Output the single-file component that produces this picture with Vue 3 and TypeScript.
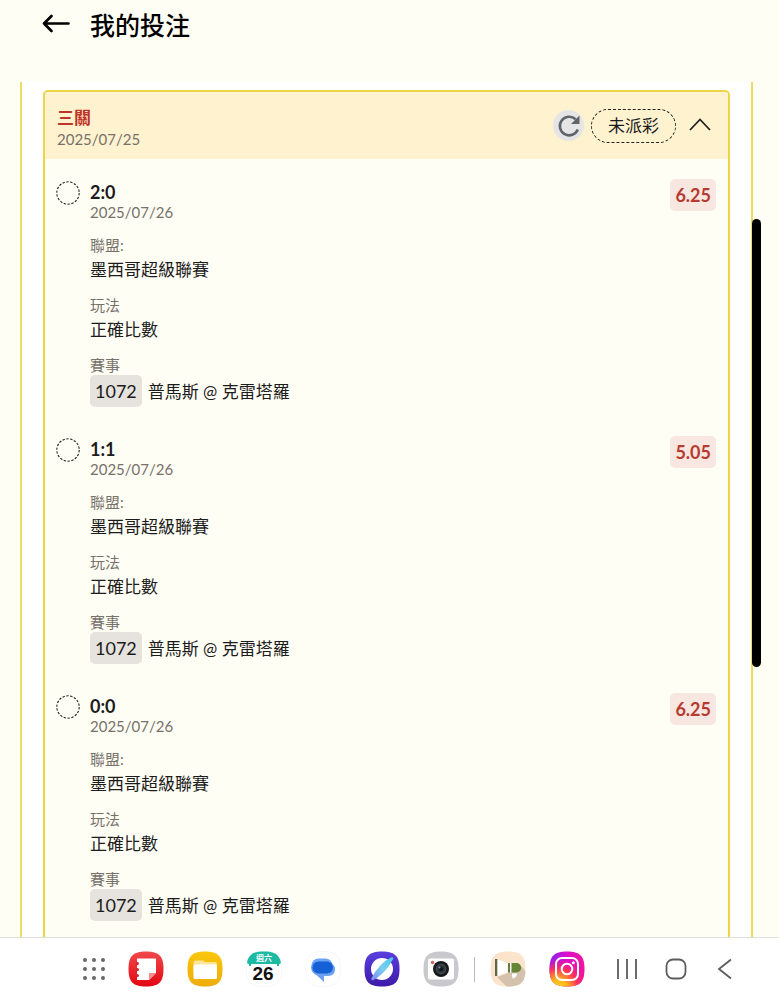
<script setup lang="ts">
import { ref } from 'vue'

interface Leg {
  score: string
  date: string
  league: string
  market: string
  matchId: string
  teams: [string, string]
  odds: string
}

const base = {
  date: '2025/07/26',
  league: '墨西哥超級聯賽',
  market: '正確比數',
  matchId: '1072',
  teams: ['普馬斯', '克雷塔羅'] as [string, string],
}

const legs: Leg[] = [
  { ...base, score: '2:0', odds: '6.25' },
  { ...base, score: '1:1', odds: '5.05' },
  { ...base, score: '0:0', odds: '6.25' },
]

const open = ref(true)
const dots = [0, 1, 2, 3, 4, 5, 6, 7, 8]
</script>

<template>
  <div class="screen">
    <header class="topbar">
      <button class="back" type="button" aria-label="返回">
        <svg width="28" height="20" viewBox="0 0 28 20" fill="none" stroke="#000" stroke-width="2.7" stroke-linecap="round" stroke-linejoin="round">
          <path d="M26.5 9.500H2M9.500 2L2 9.500l7.500 7.500" />
        </svg>
      </button>
      <h1>我的投注</h1>
    </header>

    <main class="viewport">
      <div class="panel">
        <section class="card">
          <div class="card-head">
            <div class="card-title">
              <h2>三關</h2>
              <time>2025/07/25</time>
            </div>
            <button class="refresh" type="button" aria-label="重新整理">
              <svg width="24" height="24" viewBox="0 0 24 24" fill="none">
                <path d="M20.8 15.5A9.300 9.300 0 1 1 18.600 5.300" stroke="#60656b" stroke-width="2.600" />
                <path d="M22.500 1.500v8.500H14z" fill="#60656b" />
              </svg>
            </button>
            <span class="status">未派彩</span>
            <button class="toggle" type="button" aria-label="收合" :aria-expanded="open" @click="open = !open">
              <svg width="22" height="16" viewBox="0 0 22 16" fill="none" stroke="#222" stroke-width="1.8">
                <path d="M1 12L11 1.500 21 12" />
              </svg>
            </button>
          </div>

          <template v-if="open">
            <article v-for="leg in legs" :key="leg.score" class="leg">
              <svg class="pending" width="24" height="24" viewBox="0 0 24 24" fill="none" aria-hidden="true">
                <circle cx="12" cy="12" r="11.2" stroke="#222" stroke-width="1.1" stroke-dasharray="2.4 1.5" />
              </svg>
              <div class="leg-body">
                <h3>{{ leg.score }}</h3>
                <time>{{ leg.date }}</time>
                <dl>
                  <dt>聯盟:</dt>
                  <dd>{{ leg.league }}</dd>
                  <dt>玩法</dt>
                  <dd>{{ leg.market }}</dd>
                  <dt>賽事</dt>
                  <dd class="match">
                    <span class="match-id">{{ leg.matchId }}</span>
                    <span class="teams">{{ leg.teams[0] }} @ {{ leg.teams[1] }}</span>
                  </dd>
                </dl>
              </div>
              <strong class="odds">{{ leg.odds }}</strong>
            </article>
          </template>
        </section>
      </div>
      <div class="thumb"></div>
    </main>

    <nav class="taskbar" aria-label="工作列">
      <div class="app-row">
        <button class="apps" type="button" aria-label="所有應用程式">
          <span v-for="d in dots" :key="d" class="dot"></span>
        </button>

        <button type="button" aria-label="筆記">
          <svg width="36" height="36" viewBox="0 0 36 36">
            <defs>
              <linearGradient id="note" x1="0" y1="0" x2="0" y2="1">
                <stop offset="0" stop-color="#f04a4c" /><stop offset="1" stop-color="#e30613" />
              </linearGradient>
            </defs>
            <path d="M18 .5C31 .5 35.500 5 35.500 18S31 35.500 18 35.500.5 31 .5 18 5 .5 18 .5z" fill="url(#note)" />
            <path d="M9 7.500h19v14.500l-7 7H9z" fill="#fff" />
            <path d="M21 29v-7h7z" fill="#f58b8b" />
            <g fill="#d9232b"><circle cx="9.500" cy="12.500" r="1.500" /><circle cx="9.500" cy="18.500" r="1.500" /><circle cx="9.500" cy="24.500" r="1.500" /></g>
          </svg>
        </button>

        <button type="button" aria-label="我的檔案">
          <svg width="36" height="36" viewBox="0 0 36 36">
            <defs>
              <linearGradient id="files" x1="0" y1="0" x2="0" y2="1">
                <stop offset="0" stop-color="#fac70b" /><stop offset="1" stop-color="#eeac0b" />
              </linearGradient>
            </defs>
            <path d="M18 .5C31 .5 35.500 5 35.500 18S31 35.500 18 35.500.5 31 .5 18 5 .5 18 .5z" fill="url(#files)" />
            <path d="M6.500 21v-9.500q0-2 2-2H16l2 1.500h10q2 0 2 2v8z" fill="#fde59a" />
            <rect x="6.500" y="13.500" width="23.500" height="14.500" rx="1.500" fill="#fff" />
          </svg>
        </button>

        <button type="button" aria-label="日曆">
          <svg width="36" height="36" viewBox="0 0 36 36">
            <path d="M18 .5C31 .5 35.500 5 35.500 18S31 35.500 18 35.500.5 31 .5 18 5 .5 18 .5z" fill="#fff" stroke="#f7f7f7" />
            <path d="M1 11.500C3 3 8 .5 18 .5S33 3 35 11.500q-.5 1.500-2 1.500v2h-2v-2H5v2H3v-2q-1.500 0-2-1.500z" fill="#1dbaa3" />
            <text class="cal-week" x="18" y="10" text-anchor="middle" fill="#fff">週六</text>
            <text class="cal-day" x="17" y="29" text-anchor="middle" fill="#111">26</text>
          </svg>
        </button>

        <button type="button" aria-label="訊息">
          <svg width="36" height="36" viewBox="0 0 36 36">
            <path d="M18 .5C31 .5 35.500 5 35.500 18S31 35.500 18 35.500.5 31 .5 18 5 .5 18 .5z" fill="#fff" stroke="#f7f7f7" />
            <rect x="6.500" y="7.500" width="21" height="15" rx="7" fill="#69a4f6" />
            <path d="M11 12h12q7 0 7 6.500T23 25h-4v6l-7-6.500q-6-2.500-6-9z" fill="#6b9fef" />
            <rect x="7.500" y="10.500" width="20.500" height="12" rx="6" fill="#1460d4" />
          </svg>
        </button>

        <button type="button" aria-label="瀏覽器">
          <svg width="36" height="36" viewBox="0 0 36 36">
            <defs>
              <linearGradient id="web" x1="0" y1="0" x2="0" y2="1">
                <stop offset="0" stop-color="#5a3fe0" /><stop offset="1" stop-color="#3d1ba8" />
              </linearGradient>
              <linearGradient id="ring" x1="0" y1="1" x2="1" y2="0">
                <stop offset="0" stop-color="#7f91f2" /><stop offset=".5" stop-color="#79cdf0" /><stop offset="1" stop-color="#4fcbe9" />
              </linearGradient>
            </defs>
            <path d="M18 .5C31 .5 35.500 5 35.500 18S31 35.500 18 35.500.5 31 .5 18 5 .5 18 .5z" fill="url(#web)" />
            <circle cx="18" cy="18" r="11" fill="#fff" />
            <path d="M8.500 28C12 20 20 11 28 7.500C24 15 17 24 8.500 28z" fill="url(#ring)" stroke="url(#ring)" stroke-width="2.500" stroke-linejoin="round" />
          </svg>
        </button>

        <button type="button" aria-label="相機">
          <svg width="36" height="36" viewBox="0 0 36 36">
            <path d="M18 .5C31 .5 35.500 5 35.500 18S31 35.500 18 35.500.5 31 .5 18 5 .5 18 .5z" fill="#c9c9cd" />
            <rect x="5" y="7.500" width="26" height="21" rx="2" fill="#fff" />
            <circle cx="9.500" cy="11.500" r="1.700" fill="#d3615e" />
            <circle cx="18" cy="18" r="8" fill="#171a1c" />
            <circle cx="18" cy="18" r="4.800" fill="#30383e" stroke="#465057" />
            <circle cx="18" cy="18" r="2.300" fill="#101416" />
            <circle cx="16.500" cy="16.500" r="1" fill="#8795a0" />
          </svg>
        </button>
      </div>

      <span class="divider"></span>

      <div class="app-row">
        <button type="button" aria-label="廣播">
          <svg width="36" height="36" viewBox="0 0 36 36">
            <defs>
              <clipPath id="tile"><path d="M18 .5C31 .5 35.500 5 35.500 18S31 35.500 18 35.500.5 31 .5 18 5 .5 18 .5z" /></clipPath>
            </defs>
            <g clip-path="url(#tile)">
              <rect width="36" height="36" fill="#fbe3cc" />
              <path d="M7 26l11-4 13-7 6 7v15H18z" fill="#d5c2ae" />
            </g>
            <rect x="5" y="8" width="2.500" height="17" fill="#5d6848" />
            <path d="M7.500 8.500L17.500 12v9.500L7.500 25z" fill="#fff" />
            <rect x="18" y="12" width="2" height="9.500" fill="#667c45" />
            <rect x="20" y="12" width="1.500" height="9.500" fill="#fff" />
            <path d="M21.500 12H26.500a4.700 4.700 0 0 1 0 9.500h-5z" fill="#668435" />
            <path d="M22 22.500h5q0 4-4 5l-1-2z" fill="#fff" />
          </svg>
        </button>

        <button type="button" aria-label="Instagram">
          <svg width="36" height="36" viewBox="0 0 36 36">
            <defs>
              <linearGradient id="ig" x1="0" y1="0" x2="1" y2="0">
                <stop offset="0" stop-color="#8a22ee" /><stop offset=".5" stop-color="#dc0ecb" /><stop offset="1" stop-color="#f0149e" />
              </linearGradient>
              <radialGradient id="igWarm" cx=".25" cy="1.050" r=".85">
                <stop offset="0" stop-color="#ffd421" /><stop offset=".3" stop-color="#ffb51b" /><stop offset=".65" stop-color="#ff3555" /><stop offset="1" stop-color="#ff1b85" stop-opacity="0" />
              </radialGradient>
            </defs>
            <path d="M18 .5C31 .5 35.500 5 35.500 18S31 35.500 18 35.500.5 31 .5 18 5 .5 18 .5z" fill="url(#ig)" />
            <path d="M18 .5C31 .5 35.500 5 35.500 18S31 35.500 18 35.500.5 31 .5 18 5 .5 18 .5z" fill="url(#igWarm)" />
            <g fill="none" stroke="#fff" stroke-width="2">
              <rect x="7" y="7" width="22" height="22" rx="6" />
              <circle cx="18" cy="18" r="5.300" />
            </g>
            <circle cx="24.300" cy="11.700" r="1.500" fill="#fff" />
          </svg>
        </button>
      </div>

      <div class="nav-keys">
        <button type="button" aria-label="最近使用">
          <svg width="22" height="22" viewBox="0 0 22 22" stroke="#5c5c5c" stroke-width="1.800"><path d="M2 1v20M11 1v20M20 1v20" /></svg>
        </button>
        <button type="button" aria-label="主畫面">
          <svg width="22" height="22" viewBox="0 0 22 22" fill="none" stroke="#5c5c5c" stroke-width="1.800"><rect x="1.500" y="1.500" width="19" height="19" rx="6.500" /></svg>
        </button>
        <button type="button" aria-label="上一頁">
          <svg width="22" height="22" viewBox="0 0 22 22" fill="none" stroke="#5c5c5c" stroke-width="1.800"><path d="M17 1.500L5 11l12 9.500" /></svg>
        </button>
      </div>
    </nav>
  </div>
</template>

<style>
body {
  margin: 0;
  background: #fffef5;
}
</style>

<style scoped>
.screen {
  display: flex;
  flex-direction: column;
  height: 100vh;
  overflow: hidden;
  background: #fffef5;
  color: #1c1c1c;
  font-family: Lato, "Noto Sans CJK TC", sans-serif;
}

h1, h2, h3, dl, dd {
  margin: 0;
}

button {
  display: flex;
  flex: none;
  align-items: center;
  justify-content: center;
  padding: 0;
  border: 0;
  background: none;
  font: inherit;
}

.topbar {
  display: flex;
  flex: none;
  align-items: center;
  gap: 20px;
  height: 48px;
  padding: 0 42px 34px;
}

h1 {
  padding-top: 2px;
  color: #000;
  font-size: 25px;
  font-weight: 500;
  line-height: 46px;
}

.viewport {
  position: relative;
  flex: 1;
  min-height: 0;
  overflow: hidden;
}

.panel {
  min-height: 100%;
  margin: 0 26px 0 20px;
  padding: 8px 21px 0;
  box-sizing: border-box;
  border: solid #eedb62;
  border-width: 0 2px;
  background: #fff;
}

.card {
  padding-bottom: 24px;
  border: 2px solid #ecd648;
  border-radius: 5px;
  overflow: hidden;
  background: #fffef5;
}

.card-head {
  display: flex;
  align-items: center;
  height: 67px;
  padding: 0 17px 0 12px;
  background: #fff2cf;
}

.card-title {
  flex: 1;
  padding-top: 4px;
}

h2 {
  color: #bf3328;
  font-size: 17px;
  font-weight: 700;
  line-height: 22px;
}

time {
  display: block;
  color: #77716a;
  font-size: 15px;
  line-height: 16px;
}

.card-title time {
  line-height: 20px;
}

.refresh {
  width: 31px;
  height: 31px;
  border-radius: 50%;
  background: #e5e5e5;
}

.status {
  margin: 0 13px 0 7px;
  padding: 0 16px;
  border: 1px dashed #222;
  border-radius: 17px;
  font-size: 17px;
  line-height: 32px;
}

.leg {
  display: flex;
  align-items: flex-start;
  padding: 20px 12px 9px 11px;
}

.pending {
  flex: none;
  margin: 2px 10px 0 0;
}

.leg-body {
  flex: 1;
  padding-top: 1px;
}

h3 {
  font-size: 18px;
  font-weight: 700;
  line-height: 24px;
}

dl {
  margin-top: 15px;
}

dt {
  color: #77716a;
  font-size: 15px;
  line-height: 20px;
}

dd {
  padding-top: 2px;
  margin-bottom: 12px;
  font-size: 17px;
  line-height: 26px;
}

.match {
  display: flex;
  align-items: flex-start;
  gap: 6px;
  padding-top: 0;
  margin-bottom: 0;
  line-height: 32px;
}

.match-id {
  padding: 0 5px;
  border-radius: 5px;
  background: #e6e3de;
  font-size: 18px;
}

.teams {
  margin: 1px 0 -1px;
}

.odds {
  padding: 0 5px;
  border-radius: 5px;
  background: #f8e7e1;
  color: #b73a30;
  font-size: 18px;
  line-height: 32px;
}

.thumb {
  position: absolute;
  top: 16%;
  right: 18px;
  width: 9px;
  height: 448px;
  border-radius: 5px;
  background: #000;
}

.taskbar {
  display: flex;
  flex: none;
  align-items: center;
  justify-content: center;
  height: 62px;
  padding-left: 40px;
  border-top: 1px solid #dedede;
  background: #fff;
}

.app-row {
  display: flex;
  align-items: center;
  gap: 23px;
}

.apps {
  display: grid;
  grid-template-columns: repeat(3, 4px);
  gap: 5px;
}

.dot {
  width: 4px;
  height: 4px;
  border-radius: 50%;
  background: #666;
}

.cal-week {
  font-size: 8px;
  font-weight: 700;
}

.cal-day {
  font-family: "Liberation Sans", sans-serif;
  font-size: 19px;
  font-weight: 700;
}

.divider {
  width: 1px;
  height: 25px;
  margin: 0 15px;
  background: #bbb;
}

.nav-keys {
  display: flex;
  gap: 27px;
  margin-left: 31px;
}
</style>
